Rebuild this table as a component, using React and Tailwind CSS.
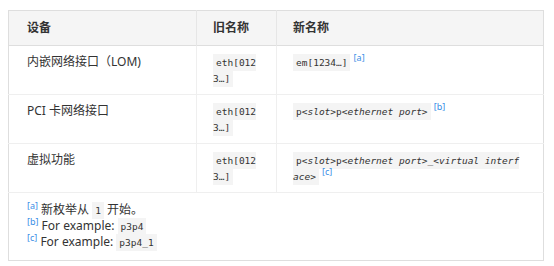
const sans = { fontFamily: '"Noto Sans", "Noto Sans CJK SC", sans-serif' };

function Code({ children }) {
  return (
    <code className="bg-[#f4f4f4] px-[3px] py-[3px] text-[9.5px] leading-[10px] text-[#333] [font-family:'DejaVu_Sans_Mono',monospace] break-all">
      {children}
    </code>
  );
}

function Ref({ children }) {
  return (
    <sup className="relative top-[-5px] align-baseline text-[9px] leading-none text-[#3a8ee6]">[{children}]</sup>
  );
}

const rows = [
  {
    device: "内嵌网络接口（LOM)",
    name: (
      <>
        <Code>em[1234…]</Code> <Ref>a</Ref>
      </>
    ),
  },
  {
    device: "PCI 卡网络接口",
    name: (
      <>
        <Code>
          p<i>&lt;slot&gt;</i>p<i>&lt;ethernet port&gt;</i>
        </Code>{" "}
        <Ref>b</Ref>
      </>
    ),
  },
  {
    device: "虚拟功能",
    name: (
      <>
        <Code>
          p<i>&lt;slot&gt;</i>p<i>&lt;ethernet port&gt;</i>_<i>&lt;virtual interface&gt;</i>
        </Code>{" "}
        <Ref>c</Ref>
      </>
    ),
  },
];

export default function App() {
  return (
    <div className="w-[554px] h-[266px] bg-white pl-2 pt-[10px] text-[12px] leading-4 text-[#333]" style={sans}>
      <table className="w-[535px] table-fixed border-collapse border border-[#dedede]">
        <colgroup>
          <col className="w-[188px]" />
          <col className="w-[80px]" />
          <col className="w-[267px]" />
        </colgroup>
        <thead>
          <tr className="bg-[#f5f5f5] border-b border-[#dedede]">
            <th className="pl-[18px] pr-4 py-[9px] text-left font-bold">设备</th>
            <th className="px-4 py-[9px] text-left font-bold border-l border-[#e6e6e6]">旧名称</th>
            <th className="px-4 py-[9px] text-left font-bold border-l border-[#e6e6e6]">新名称</th>
          </tr>
        </thead>
        <tbody>
          {rows.map((r, i) => (
            <tr key={i} className="border-b border-[#efefef] align-top">
              <td className="pl-[18px] pr-4 pt-[8px] pb-[8px]">{r.device}</td>
              <td className="px-4 pt-[8px] pb-[8px] border-l border-[#efefef]">
                <Code>eth[0123…]</Code>
              </td>
              <td className="pl-4 pr-5 pt-[8px] pb-[8px] border-l border-[#efefef]">{r.name}</td>
            </tr>
          ))}
          <tr>
            <td colSpan={3} className="pl-[18px] pt-[9px] pb-[10px]">
              <div>
                <Ref>a</Ref> 新枚举从 <Code>1</Code> 开始。
              </div>
              <div>
                <Ref>b</Ref> For example: <Code>p3p4</Code>
              </div>
              <div>
                <Ref>c</Ref> For example: <Code>p3p4_1</Code>
              </div>
            </td>
          </tr>
        </tbody>
      </table>
    </div>
  );
}
